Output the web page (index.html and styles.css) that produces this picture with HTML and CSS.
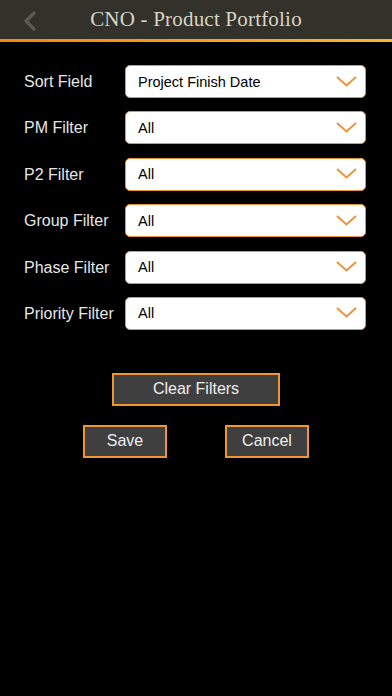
FILE: index.html
```html
<!DOCTYPE html>
<html lang="en">
<head>
    <meta charset="UTF-8">
    <meta name="viewport" content="width=device-width, initial-scale=1.0">
    <title>CNO - Product Portfolio</title>
    <link rel="stylesheet" href="styles.css">
</head>
<body>
    <div class="header">
        <svg class="back" width="14" height="20" viewBox="0 0 14 20">
            <path d="M11 2 L3 10 L11 18" fill="none" stroke="#5b5a50" stroke-width="3.2" stroke-linecap="round" stroke-linejoin="round"/>
        </svg>
        <h1>CNO - Product Portfolio</h1>
    </div>

    <div class="form">
        <div class="row">
            <div class="label">Sort Field</div>
            <div class="picker"><span>Project Finish Date</span><svg width="21" height="11" viewBox="0 0 21 11"><path d="M1 1 L10.5 9.5 L20 1" fill="none" stroke="#f0923a" stroke-width="2"/></svg></div>
        </div>
        <div class="row">
            <div class="label">PM Filter</div>
            <div class="picker"><span>All</span><svg width="21" height="11" viewBox="0 0 21 11"><path d="M1 1 L10.5 9.5 L20 1" fill="none" stroke="#f0923a" stroke-width="2"/></svg></div>
        </div>
        <div class="row">
            <div class="label">P2 Filter</div>
            <div class="picker"><span>All</span><svg width="21" height="11" viewBox="0 0 21 11"><path d="M1 1 L10.5 9.5 L20 1" fill="none" stroke="#f0923a" stroke-width="2"/></svg></div>
        </div>
        <div class="row">
            <div class="label">Group Filter</div>
            <div class="picker"><span>All</span><svg width="21" height="11" viewBox="0 0 21 11"><path d="M1 1 L10.5 9.5 L20 1" fill="none" stroke="#f0923a" stroke-width="2"/></svg></div>
        </div>
        <div class="row">
            <div class="label">Phase Filter</div>
            <div class="picker"><span>All</span><svg width="21" height="11" viewBox="0 0 21 11"><path d="M1 1 L10.5 9.5 L20 1" fill="none" stroke="#f0923a" stroke-width="2"/></svg></div>
        </div>
        <div class="row">
            <div class="label">Priority Filter</div>
            <div class="picker"><span>All</span><svg width="21" height="11" viewBox="0 0 21 11"><path d="M1 1 L10.5 9.5 L20 1" fill="none" stroke="#f0923a" stroke-width="2"/></svg></div>
        </div>
    </div>

    <div class="actions">
        <button class="btn btn-wide">Clear Filters</button>
        <div class="btn-row">
            <button class="btn">Save</button>
            <button class="btn">Cancel</button>
        </div>
    </div>
</body>
</html>
```

FILE: styles.css
```css
body {
    margin: 0;
    background-color: #000000;
    font-family: "Liberation Sans", Arial, sans-serif;
    color: #e6e6e6;
}

.header {
    height: 39px;
    background-color: #33322a;
    border-bottom: 3px solid #f7900f;
    border-image: linear-gradient(to right, #f7860e, #f9b632) 1;
    display: flex;
    align-items: center;
    justify-content: center;
    position: relative;
}

.back {
    position: absolute;
    left: 23px;
    top: 11px;
}

.header h1 {
    margin: 0 0 1px 0;
    font-family: "Liberation Serif", "Times New Roman", serif;
    font-weight: normal;
    font-size: 21px;
    color: #d8d5c8;
    letter-spacing: 0.2px;
}

.form {
    padding: 23px 26px 0 24px;
    display: flex;
    flex-direction: column;
    gap: 13.4px;
}

.row {
    display: flex;
    align-items: center;
    height: 33px;
}

.label {
    width: 101px;
    font-size: 16px;
    padding-top: 1px;
}

.picker {
    flex: 1;
    height: 31px;
    background-color: #ffffff;
    border: 1px solid #f0923a;
    border-radius: 5px;
    display: flex;
    align-items: center;
    justify-content: space-between;
    padding: 0 8px 0 12px;
    color: #000000;
    font-size: 14.5px;
}

.picker svg {
    margin-top: -1px;
}

.actions {
    display: flex;
    flex-direction: column;
    align-items: center;
    margin-top: 43px;
    gap: 19px;
}

.btn-row {
    display: flex;
    gap: 58px;
}

.btn {
    width: 84px;
    height: 33px;
    background-color: #3f3f3f;
    border: 2px solid #f0962f;
    color: #eeeeee;
    font-family: "Liberation Sans", Arial, sans-serif;
    font-size: 16px;
    padding: 0;
}

.btn-wide {
    width: 168px;
    height: 33px;
}
```
